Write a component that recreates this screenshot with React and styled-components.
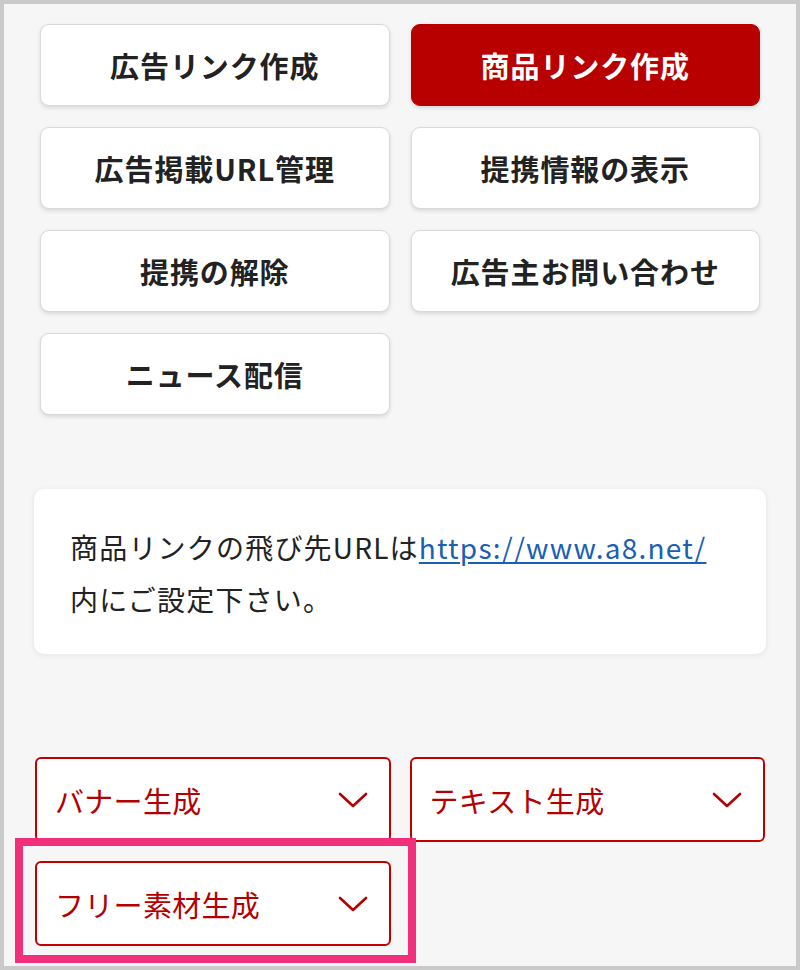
import React from "react";
import styled, { createGlobalStyle } from "styled-components";

const Global = createGlobalStyle`
  html, body { margin: 0; padding: 0; }
  body { font-family: "Noto Sans CJK JP", "Noto Sans", sans-serif; }
  * { box-sizing: border-box; }
`;

const Frame = styled.div`
  width: 800px;
  height: 970px;
  border: 4px solid #cacaca;
  background: #f6f6f6;
  padding: 20px 30px 0;
`;

const ButtonGrid = styled.div`
  display: grid;
  grid-template-columns: 1fr 1fr;
  gap: 21px;
  margin: 0 6px 0 6px;
`;

const NavButton = styled.button`
  height: 82px;
  border-radius: 9px;
  border: 1px solid ${(p) => (p.$active ? "#b80000" : "#d9d9d9")};
  background: ${(p) => (p.$active ? "#b80000" : "#ffffff")};
  color: ${(p) => (p.$active ? "#ffffff" : "#222222")};
  box-shadow: 0 2px 4px rgba(0, 0, 0, 0.12);
  font-family: "Noto Sans CJK JP", sans-serif;
  font-weight: 700;
  font-size: 29px;
  letter-spacing: 0.9px;
  display: flex;
  align-items: center;
  justify-content: center;
  padding: 0;
  cursor: pointer;
`;

const InfoBox = styled.div`
  margin-top: 74px;
  background: #ffffff;
  border-radius: 10px;
  box-shadow: 0 1px 6px rgba(0, 0, 0, 0.08);
  padding: 32px 36px 29px;
  font-size: 28px;
  line-height: 52px;
  color: #222222;
  letter-spacing: 1.2px;
`;

const Link = styled.a`
  color: #1a5fb4;
  text-decoration: underline;
  text-underline-offset: 3px;
`;

const DropGrid = styled.div`
  margin-top: 103px;
  display: grid;
  grid-template-columns: 1fr 1fr;
  column-gap: 19px;
  row-gap: 19px;
  margin-left: 1px;
  margin-right: 1px;
`;

const DropWrap = styled.div`
  position: relative;
`;

const Highlight = styled.div`
  position: absolute;
  top: -23px;
  left: -20px;
  right: -25px;
  bottom: -17px;
  border: 8px solid #f0307a;
  pointer-events: none;
`;

const Dropdown = styled.div`
  height: 85px;
  border: 2px solid #c00000;
  border-radius: 6px;
  background: #ffffff;
  display: flex;
  align-items: center;
  justify-content: space-between;
  padding: 0 21px 0 18px;
  color: #b40000;
  font-size: 29px;
  letter-spacing: 0.3px;
`;

const Chevron = () => (
  <svg width="30" height="18" viewBox="0 0 30 18" fill="none">
    <polyline
      points="2,3 15,15 28,3"
      stroke="#b40000"
      strokeWidth="2.6"
      strokeLinecap="round"
      strokeLinejoin="round"
    />
  </svg>
);

const buttons = [
  { label: "広告リンク作成" },
  { label: "商品リンク作成", active: true },
  { label: "広告掲載URL管理" },
  { label: "提携情報の表示" },
  { label: "提携の解除" },
  { label: "広告主お問い合わせ" },
  { label: "ニュース配信" },
];

const drops = [
  { label: "バナー生成" },
  { label: "テキスト生成" },
  { label: "フリー素材生成", highlight: true },
];

export default function App() {
  return (
    <>
      <Global />
      <Frame>
        <ButtonGrid>
          {buttons.map((b) => (
            <NavButton key={b.label} $active={b.active}>
              {b.label}
            </NavButton>
          ))}
        </ButtonGrid>
        <InfoBox>
          商品リンクの飛び先URLは
          <Link href="#">https://www.a8.net/</Link>
          <br />
          内にご設定下さい。
        </InfoBox>
        <DropGrid>
          {drops.map((d) => (
            <DropWrap key={d.label}>
              <Dropdown>
                <span>{d.label}</span>
                <Chevron />
              </Dropdown>
              {d.highlight && <Highlight />}
            </DropWrap>
          ))}
        </DropGrid>
      </Frame>
    </>
  );
}
